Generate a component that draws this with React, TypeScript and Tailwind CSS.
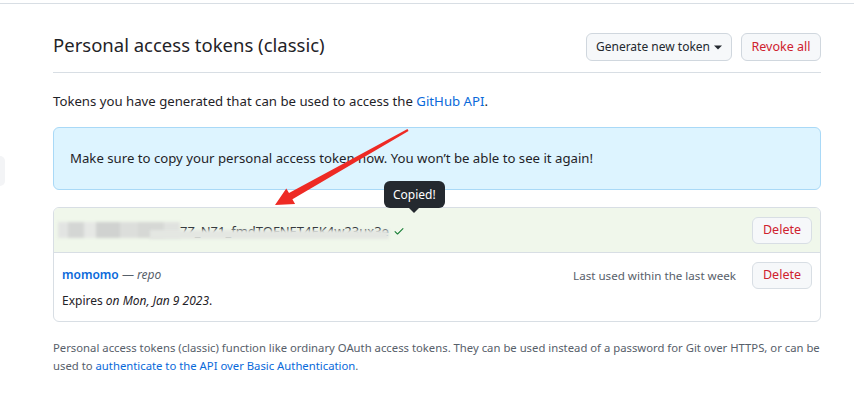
import React from "react";

const font = { fontFamily: '"Noto Sans", "Liberation Sans", sans-serif' };

function DeleteButton() {
  return (
    <button className="h-[27px] w-[60px] rounded-md border border-[#d8dee4] bg-[#f6f8fa] text-[12.5px] text-[#cf222e]">
      Delete
    </button>
  );
}

function BlurredToken() {
  // mosaic-style blocks that hide the start of the token
  const blocks = [
    { w: 'w-[10px]', c: 'bg-[#e2e4e2]' },
    { w: 'w-[16px]', c: 'bg-[#d4d6d4]' },
    { w: 'w-[12px]', c: 'bg-[#e6e8e5]' },
    { w: 'w-[24px]', c: 'bg-[#d0d2d0]' },
    { w: 'w-[18px]', c: 'bg-[#dcdedb]' },
    { w: 'w-[26px]', c: 'bg-[#d6d8d5]' },
    { w: 'w-[16px]', c: 'bg-[#e0e2df]' },
  ];
  return (
    <div className="flex items-center">
      <div className="flex h-[16px] blur-[1.5px]">
        {blocks.map((b, i) => (
          <div key={i} className={`${b.w} ${b.c} h-full`} />
        ))}
      </div>
      <div className="relative">
        <span className="text-[13px] text-[#2f3338]">7Z_NZ1_fmdTOFNET4EK4w23ux3e</span>
        <div className="pointer-events-none absolute left-[-30px] right-[0px] top-[12px] h-[9px] bg-[#e4e7e2] blur-[1.5px]" />
      </div>
      <svg width="14" height="12" viewBox="0 0 16 16" className="ml-[3px] mt-[2px]" fill="#1a7f37">
        <path d="M13.78 4.22a.75.75 0 0 1 0 1.06l-7.25 7.25a.75.75 0 0 1-1.06 0L2.22 9.28a.75.75 0 0 1 1.06-1.06L6 10.94l6.72-6.72a.75.75 0 0 1 1.06 0Z" />
      </svg>
    </div>
  );
}

export default function App() {
  return (
    <div className="relative h-[400px] w-[854px] overflow-hidden bg-white text-[#1f2328]" style={font}>
      {/* top edge line */}
      <div className="h-[4px] border-b border-[#d8dee4]" />

      <div className="flex">
        {/* sliver of a panel off to the left */}
        <div className="w-[5px] pt-[152px]">
          <div className="h-[30px] rounded-r-md bg-[#f3f4f6]" />
        </div>

        <div className="ml-[48px] w-[768px]">
          {/* Header */}
          <div className="flex h-[69px] items-end justify-between border-b border-[#d8dee4] pb-[11px]">
            <h2 className="mb-[2px] text-[18.5px] font-normal leading-[28px] text-[#1f2328]">Personal access tokens (classic)</h2>
            <div className="flex items-center gap-[9px]">
              <button className="flex h-[28px] w-[146px] items-center justify-center gap-[4px] rounded-md border border-[#d0d7de] bg-[#f6f8fa] text-[12px] text-[#24292f]">
                Generate new token
                <svg width="8" height="8" viewBox="0 0 8 8" fill="#24292f">
                  <path d="M0 2.5h8L4 6.5z" />
                </svg>
              </button>
              <button className="h-[28px] w-[80px] rounded-md border border-[#d0d7de] bg-[#f6f8fa] text-[12.5px] text-[#cf222e]">
                Revoke all
              </button>
            </div>
          </div>

          <p className="mt-[18px] text-[13.2px] leading-[20px]">
            Tokens you have generated that can be used to access the{" "}
            <span className="text-[#0969da]">GitHub API</span>.
          </p>

          {/* flash notice */}
          <div className="mt-[16px] flex h-[63px] items-center rounded-md border border-[#a9d9f7] bg-[#ddf4ff] px-[16px] text-[13.2px]">
            Make sure to copy your personal access token now. You won’t be able to see it again!
          </div>

          {/* token list */}
          <div className="mt-[17px] overflow-hidden rounded-md border border-[#d8dee4]">
            <div className="flex h-[45px] items-center justify-between border-b border-[#d8dee4] bg-[#f0f7eb] pl-[4px] pr-[8px]">
              <BlurredToken />
              <DeleteButton />
            </div>
            <div className="flex items-start justify-between pb-[7px] pl-[8px] pr-[8px] pt-[9px]">
              <div className="text-[12px] leading-[26px]">
                <div>
                  <span className="font-semibold text-[#0969da]">momomo</span>
                  <span className="text-[#57606a]"> — <em>repo</em></span>
                </div>
                <div>
                  Expires <em>on Mon, Jan 9 2023</em>.
                </div>
              </div>
              <div className="flex items-center gap-[16px]">
                <span className="text-[11.6px] text-[#57606a]">Last used within the last week</span>
                <DeleteButton />
              </div>
            </div>
          </div>

          <p className="mt-[17px] text-[11.3px] leading-[18px] text-[#57606a]">
            Personal access tokens (classic) function like ordinary OAuth access tokens. They can be used instead of a password for Git over HTTPS, or can be used to{" "}
            <span className="text-[#0969da]">authenticate to the API over Basic Authentication</span>.
          </p>
        </div>
      </div>

      {/* Copied! tooltip */}
      <div className="pointer-events-none absolute left-[384px] top-[181px] flex flex-col items-center">
        <div className="flex h-[27px] items-center rounded-md bg-[#24292f] px-[9px] text-[12px] text-white">Copied!</div>
        <div className="h-0 w-0 border-x-[5px] border-t-[5px] border-x-transparent border-t-[#24292f]" />
      </div>

      {/* red annotation arrow */}
      <svg className="pointer-events-none absolute left-0 top-0" width="854" height="400">
        <polygon
          fill="#ee2a24"
          points="407.5,129.1 289,193.1 286.3,188.4 275,205 295.1,204 292.4,199.2 408.5,130.9"
        />
      </svg>
    </div>
  );
}
